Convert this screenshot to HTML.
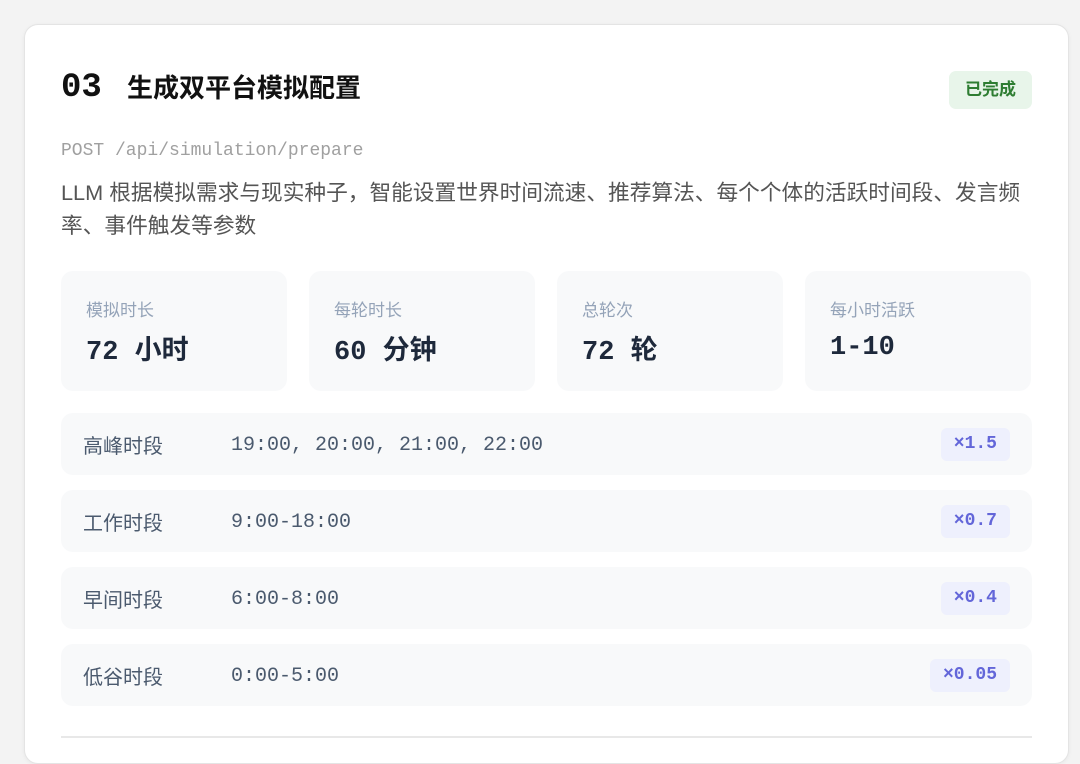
<!DOCTYPE html>
<html><head><meta charset="utf-8"><style>
*{box-sizing:border-box;margin:0;padding:0}
body{width:1080px;height:750px;background:#f3f3f3;overflow:hidden;font-family:"Liberation Sans","Noto Sans CJK SC",sans-serif;position:relative}
.card{position:absolute;left:24px;top:24px;width:1045px;height:740px;background:#fff;border:1px solid #e4e4e4;border-radius:14px;box-shadow:0 1px 4px rgba(0,0,0,.05)}
.mono{font-family:"Liberation Mono","Noto Sans CJK SC",monospace}
.abs{position:absolute;white-space:nowrap}
.stat{position:absolute;top:246px;width:226px;height:120px;background:#f8f9fa;border-radius:12px}
.stat .l{position:absolute;left:25px;top:25px;font-size:17px;color:#94a3b8}
.stat .v{position:absolute;left:25px;top:59px;height:36px;display:flex;align-items:center;font-size:27px;font-weight:bold;color:#1e293b;white-space:pre}
.row{position:absolute;left:36px;width:971px;height:62px;background:#f8f9fa;border-radius:12px}
.row .l{position:absolute;left:22px;top:0;height:62px;line-height:62px;font-size:20px;color:#4b5a6e;padding-top:3px}
.row .v{position:absolute;left:170px;top:2px;height:62px;line-height:62px;font-size:20px;color:#4b5a6e}
.row .b{position:absolute;right:22px;top:15px;height:33px;padding:0 13px;background:#eef0fd;border-radius:6px;color:#6366d9;font-size:18px;line-height:33px;font-weight:bold}
</style></head><body>
<div class="card">
<div class="abs mono" style="left:36px;top:43px;font-size:34px;line-height:40px;font-weight:bold;color:#111">03</div>
<div class="abs" style="left:102px;top:46px;font-size:26px;line-height:34px;font-weight:bold;color:#111">生成双平台模拟配置</div>
<div class="abs" style="left:924px;top:46px;width:83px;height:38px;background:#e8f5ea;border-radius:7px;color:#2e7d32;font-size:17px;font-weight:bold;text-align:center;line-height:38px">已完成</div>
<div class="abs mono" style="left:36px;top:116px;font-size:18px;color:#a0a0a0">POST /api/simulation/prepare</div>
<div class="abs" style="left:36px;top:151px;font-size:21.7px;line-height:33px;color:#555">LLM 根据模拟需求与现实种子，智能设置世界时间流速、推荐算法、每个个体的活跃时间段、发言频<br>率、事件触发等参数</div>
<div class="stat" style="left:36px"><div class="l">模拟时长</div><div class="v mono">72 小时</div></div>
<div class="stat" style="left:284px"><div class="l">每轮时长</div><div class="v mono">60 分钟</div></div>
<div class="stat" style="left:532px"><div class="l">总轮次</div><div class="v mono">72 轮</div></div>
<div class="stat" style="left:780px"><div class="l">每小时活跃</div><div class="v mono">1-10</div></div>
<div class="row" style="top:388px"><div class="l">高峰时段</div><div class="v mono">19:00, 20:00, 21:00, 22:00</div><div class="b mono">×1.5</div></div>
<div class="row" style="top:465px"><div class="l">工作时段</div><div class="v mono">9:00-18:00</div><div class="b mono">×0.7</div></div>
<div class="row" style="top:542px"><div class="l">早间时段</div><div class="v mono">6:00-8:00</div><div class="b mono">×0.4</div></div>
<div class="row" style="top:619px"><div class="l">低谷时段</div><div class="v mono">0:00-5:00</div><div class="b mono">×0.05</div></div>
<div class="abs" style="left:36px;top:711px;width:971px;height:2px;background:#e8e8e8"></div>
</div>
</body></html>
